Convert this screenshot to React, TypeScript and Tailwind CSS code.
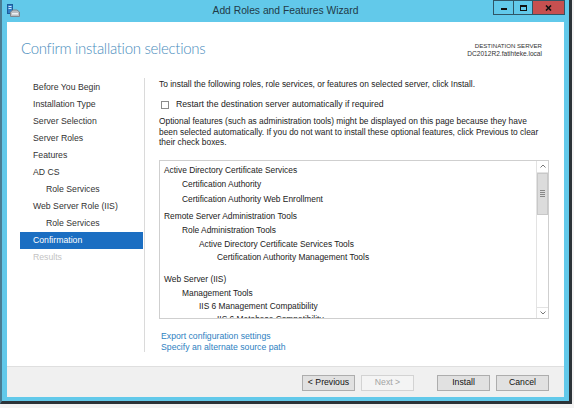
import React from "react";

const navItems: { label: string; indent?: boolean; active?: boolean; disabled?: boolean }[] = [
  { label: "Before You Begin" },
  { label: "Installation Type" },
  { label: "Server Selection" },
  { label: "Server Roles" },
  { label: "Features" },
  { label: "AD CS" },
  { label: "Role Services", indent: true },
  { label: "Web Server Role (IIS)" },
  { label: "Role Services", indent: true },
  { label: "Confirmation", active: true },
  { label: "Results", disabled: true },
];

const listItems: { label: string; level: number; mt: string }[] = [
  { label: "Active Directory Certificate Services", level: 0, mt: "mt-0" },
  { label: "Certification Authority", level: 1, mt: "mt-[1px]" },
  { label: "Certification Authority Web Enrollment", level: 1, mt: "mt-[2px]" },
  { label: "Remote Server Administration Tools", level: 0, mt: "mt-[4px]" },
  { label: "Role Administration Tools", level: 1, mt: "mt-[1px]" },
  { label: "Active Directory Certificate Services Tools", level: 2, mt: "mt-[1px]" },
  { label: "Certification Authority Management Tools", level: 3, mt: "mt-0" },
  { label: "Web Server (IIS)", level: 0, mt: "mt-[9px]" },
  { label: "Management Tools", level: 1, mt: "mt-[1px]" },
  { label: "IIS 6 Management Compatibility", level: 2, mt: "mt-0" },
  { label: "IIS 6 Metabase Compatibility", level: 3, mt: "mt-0" },
];

const indentClass = ["pl-0", "pl-[18px]", "pl-[35px]", "pl-[53px]"];

function WizardIcon() {
  return (
    <svg width="13" height="13" viewBox="0 0 13 13">
      <rect x="0.5" y="0.5" width="5" height="9" fill="#2f7fc8" stroke="#1d5d9a" strokeWidth="1" />
      <rect x="1.5" y="2" width="3" height="1" fill="#cfe6fb" />
      <rect x="1.5" y="4" width="3" height="1" fill="#cfe6fb" />
      <path d="M3.5 8 L6 6 L10 6 L12.5 8 L12.5 12.5 L3.5 12.5 Z" fill="#b9bfc4" stroke="#7e878e" strokeWidth="1" />
      <rect x="5" y="9" width="6" height="1.5" fill="#eef1f3" />
    </svg>
  );
}

export default function App() {
  const body = "font-['Liberation_Sans',Arial,sans-serif]";
  return (
    <div className={`w-[574px] h-[408px] bg-[#f3f3f3] overflow-hidden ${body}`}>
      <div className="w-[572px] h-[404px] bg-[#62c9ea] border-l-2 border-r-[3px] border-b-[3px] border-l-[#4a7d93] border-r-[#2c3338] border-b-[#2c3338] flex flex-col">
        {/* Title bar */}
        <div className="h-[22px] relative flex items-center shrink-0">
          <div className="absolute left-[5px] top-[4px]">
            <WizardIcon />
          </div>
          <div className="flex-1 text-center text-[10.3px] text-[#1f3a48] leading-none pt-[1px]">
            Add Roles and Features Wizard
          </div>
          <div className="absolute right-[4px] top-0 flex h-[15px]">
            <div className="w-[20px] h-[15px] border border-[#2f5566] border-r-0 flex items-end justify-center pb-[4px]">
              <div className="w-[6px] h-[2px] bg-[#111]" />
            </div>
            <div className="w-[19px] h-[15px] border border-[#2f5566] border-r-0 flex items-center justify-center">
              <div className="w-[7px] h-[6px] border-[1.5px] border-[#111] border-t-2" />
            </div>
            <div className="w-[33px] h-[15px] border border-[#2f5566] bg-[#c75050] flex items-center justify-center">
              <svg width="7" height="6" viewBox="0 0 7 6">
                <path d="M1 0.5 L6 5.5 M6 0.5 L1 5.5" stroke="#111" strokeWidth="1.6" />
              </svg>
            </div>
          </div>
        </div>

        {/* Client area */}
        <div className="mx-[5px] w-[557px] h-[375px] bg-white flex flex-col">
          {/* Header */}
          <div className="h-[54px] shrink-0 flex justify-between">
            <div className="pl-[14px] pt-[16px] text-[15px] tracking-[-0.02em] leading-[20px] font-light text-[#4a8dbd] font-['Lato',sans-serif]">
              Confirm installation selections
            </div>
            <div className="pr-[22px] pt-[20px] text-right text-[#333] leading-[8px]">
              <div className="text-[6.1px]">DESTINATION SERVER</div>
              <div className="text-[6.6px]">DC2012R2.fatihteke.local</div>
            </div>
          </div>

          {/* Body */}
          <div className="flex-1 flex min-h-0">
            <div className="w-[137px] shrink-0 pt-[3px] pl-[13px] pr-[1px] flex">
              <div className="flex-1 flex flex-col">
                {navItems.map((n, i) => (
                  <div
                    key={i}
                    className={`h-[17px] leading-[17px] text-[8.7px] ${n.indent ? "pl-[26px]" : "pl-[13px]"} ${
                      n.active ? "bg-[#1b6ec2] text-white" : n.disabled ? "text-[#c4c4c4]" : "text-[#333]"
                    }`}
                  >
                    {n.label}
                  </div>
                ))}
              </div>
            </div>
            <div className="w-px bg-[#dadada] mt-[2px] mb-[14px] shrink-0" />
            <div className="flex-1 pl-[14px] pr-[17px] pt-[3px] text-[8.4px] text-[#222]">
              <div className="leading-[11px]">
                To install the following roles, role services, or features on selected server, click Install.
              </div>
              <div className="mt-[9px] h-[11px] flex items-center">
                <div className="w-[8px] h-[8px] border border-[#8c8c8c] bg-white ml-[2px]" />
                <div className="ml-[7px] leading-[11px] text-[8.7px]">Restart the destination server automatically if required</div>
              </div>
              <div className="mt-[6px] leading-[10.5px] whitespace-nowrap">
                Optional features (such as administration tools) might be displayed on this page because they have
                <br />
                been selected automatically. If you do not want to install these optional features, click Previous to clear
                <br />
                their check boxes.
              </div>
              <div className="mt-[12px] w-[390px] h-[159px] border border-[#cfcfcf] flex">
                <div className="flex-1 overflow-hidden pl-[4px] pt-[3px]">
                  {listItems.map((it, i) => (
                    <div key={i} className={`h-[13px] leading-[13px] whitespace-nowrap ${it.mt} ${indentClass[it.level]}`}>
                      {it.label}
                    </div>
                  ))}
                </div>
                <div className="w-[12px] shrink-0 border-l border-[#e3e3e3] flex flex-col bg-white">
                  <div className="h-[12px] border-b border-[#e3e3e3] flex items-center justify-center">
                    <svg width="6" height="4" viewBox="0 0 6 4">
                      <path d="M0.5 3.5 L3 1 L5.5 3.5" fill="none" stroke="#777" strokeWidth="1" />
                    </svg>
                  </div>
                  <div className="h-[42px] bg-[#dcdcdc] border border-[#c8c8c8] flex items-center justify-center">
                    <div className="flex flex-col gap-[1px]">
                      <div className="w-[5px] h-px bg-[#888]" />
                      <div className="w-[5px] h-px bg-[#888]" />
                      <div className="w-[5px] h-px bg-[#888]" />
                      <div className="w-[5px] h-px bg-[#888]" />
                    </div>
                  </div>
                  <div className="flex-1" />
                  <div className="h-[11px] border-t border-[#e3e3e3] flex items-center justify-center">
                    <svg width="6" height="4" viewBox="0 0 6 4">
                      <path d="M0.5 0.5 L3 3 L5.5 0.5" fill="none" stroke="#777" strokeWidth="1" />
                    </svg>
                  </div>
                </div>
              </div>
              <div className="mt-[12px] pl-[2px] text-[#2e7fbf] leading-[11px] text-[8.7px]">
                <div>Export configuration settings</div>
                <div>Specify an alternate source path</div>
              </div>
            </div>
          </div>

          {/* Footer */}
          <div className="h-[31px] shrink-0 border-t border-[#dfdfdf] bg-[#f0f0f0] flex justify-end items-start pt-[8px] pr-[15px] text-[8.7px]">
            <div className="w-[53px] h-[16px] border border-[#adadad] bg-[#e1e1e1] flex items-center justify-center text-[#111]">
              &lt; Previous
            </div>
            <div className="ml-[6px] w-[53px] h-[16px] border border-[#d3d3d3] bg-[#f4f4f4] flex items-center justify-center text-[#a3a3a3]">
              Next &gt;
            </div>
            <div className="ml-[23px] w-[53px] h-[16px] border border-[#adadad] bg-[#e1e1e1] flex items-center justify-center text-[#111]">
              Install
            </div>
            <div className="ml-[6px] w-[53px] h-[16px] border border-[#adadad] bg-[#e1e1e1] flex items-center justify-center text-[#111]">
              Cancel
            </div>
          </div>
        </div>
      </div>
    </div>
  );
}
